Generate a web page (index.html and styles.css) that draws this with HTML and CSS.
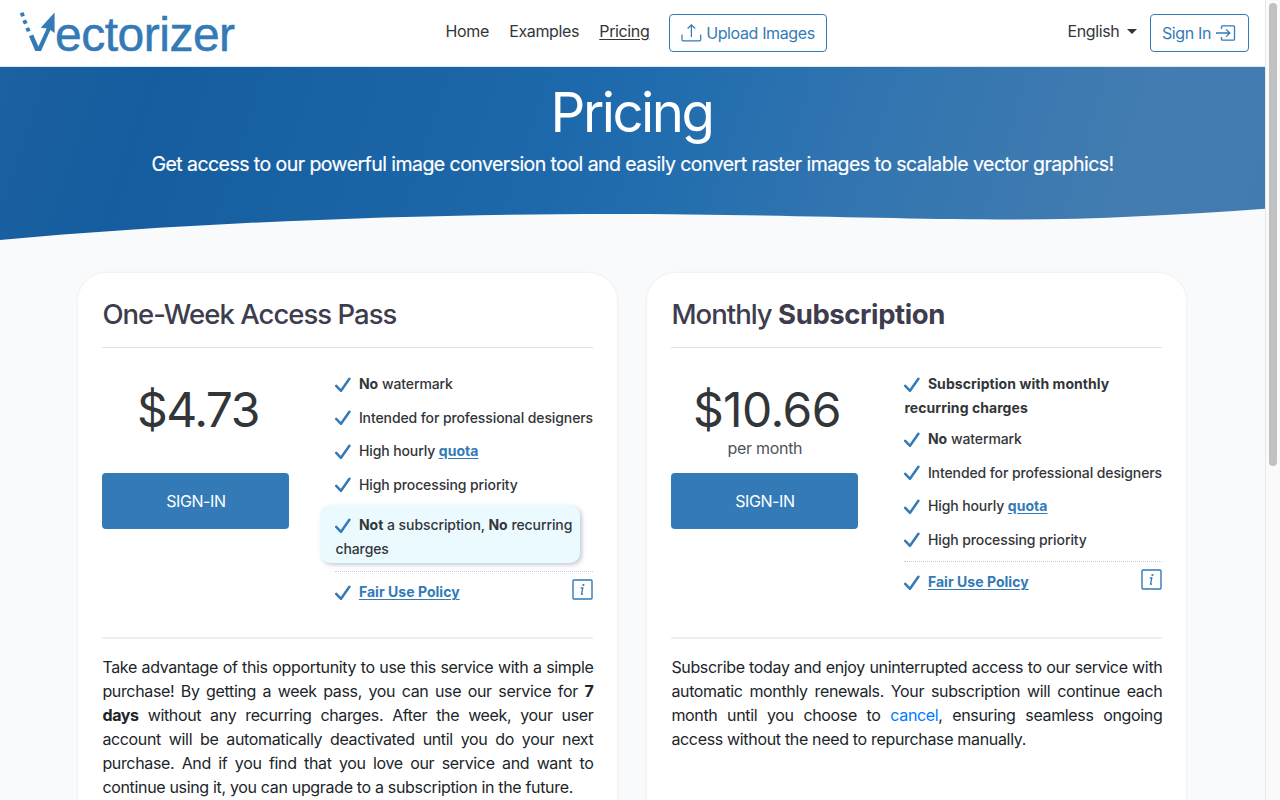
FILE: index.html
```html
<!DOCTYPE html>
<html lang="en">
<head>
<meta charset="utf-8">
<title>Pricing - Vectorizer</title>
<link rel="stylesheet" href="styles.css">
</head>
<body>
<svg class="defs" width="0" height="0" aria-hidden="true">
  <symbol id="check" viewBox="0 0 16 16"><path d="M1.2 8.8 L6 13.8 L14.4 1.8" fill="none" stroke="#337ab7" stroke-width="2.500" stroke-linecap="round" stroke-linejoin="round"/></symbol>
  <symbol id="info" viewBox="0 0 21 21"><rect x="1" y="1" width="19" height="19" rx="1" fill="none" stroke="#337ab7" stroke-width="1.4"/><circle cx="11.4" cy="6" r="1.1" fill="#337ab7"/><path d="M8.8 9h2l-1.3 6.2h1.6" fill="none" stroke="#337ab7" stroke-width="1.3"/></symbol>
</svg>
<div class="page">
  <header class="header">
    <a class="logo">
      <svg width="240" height="66" viewBox="0 0 240 66">
        <g fill="#337ab7">
          <path d="M19.800 13.500l3.600-1.400 1.500 3.300-3.600 1.500zM22.400 21l3.600-1.400 1.500 3.400-3.600 1.400zM25.400 28.600l3.700-1.400 1.500 3.500-3.700 1.400z"/>
          <path d="M29 36.200l4.200-1.600 5.200 11.800 8.300-18-6-.6L54.600 12.500V33l-4.200-3.100-9.300 21.200h-5.800z"/>
        </g>
        <text class="logo-text" x="55" y="51">ectorizer</text>
      </svg>
    </a>
    <nav class="nav">
      <a>Home</a><a>Examples</a><a class="current">Pricing</a>
    </nav>
    <a class="btn upload">
      <svg width="21" height="20" viewBox="0 0 21 20"><path d="M1 11.5v5.3q0 1 1 1h16.700q1 0 1-1v-5.300M10.400 14V2M6.600 5.500l3.800-3.700 3.800 3.700" fill="none" stroke="#337ab7" stroke-width="1.200"/></svg>
      <span>Upload Images</span>
    </a>
    <a class="lang">English<i class="caret"></i></a>
    <a class="btn signin">
      <span>Sign In</span>
      <svg width="20" height="18" viewBox="0 0 20 18"><path d="M5.500 5V2.800q0-1 1-1h11q1 0 1 1v12.400q0 1-1 1h-11q-1 0-1-1V13M0 9h13.500M10.200 5.400L13.800 9l-3.600 3.600" fill="none" stroke="#337ab7" stroke-width="1.300"/></svg>
    </a>
  </header>
  <section class="hero">
    <h1>Pricing</h1>
    <p>Get access to our powerful image conversion tool and easily convert raster images to scalable vector graphics!</p>
    <svg class="wave" width="1265" height="35" viewBox="0 206 1265 35"><path d="M0 240C200 222 420 214 610 214C760 214 900 219.500 1010 219.500C1090 219.500 1180 215 1265 208.700V241H0Z" fill="#f9fafc"/></svg>
  </section>
  <main class="cards">
    <article class="card">
      <h2>One-Week Access Pass</h2>
      <div class="body">
        <div class="buy">
          <div class="price tight">$4.73</div>
          <div class="period"></div>
          <a class="cta">SIGN-IN</a>
        </div>
        <div class="features">
          <ul>
            <li><svg class="check"><use href="#check"/></svg><b>No</b> watermark</li>
            <li><svg class="check"><use href="#check"/></svg>Intended for professional designers</li>
            <li><svg class="check"><use href="#check"/></svg>High hourly <a>quota</a></li>
            <li><svg class="check"><use href="#check"/></svg>High processing priority</li>
          </ul>
          <div class="highlight"><svg class="check"><use href="#check"/></svg><b>Not</b> a subscription, <b>No</b> recurring<br>charges</div>
          <div class="fair"><span><svg class="check"><use href="#check"/></svg><a>Fair Use Policy</a></span><svg class="info"><use href="#info"/></svg></div>
        </div>
      </div>
      <p class="desc">Take advantage of this opportunity to use this service with a simple<br>purchase! By getting a week pass, you can use our service for <b>7</b><br><b>days</b> without any recurring charges. After the week, your user<br>account will be automatically deactivated until you do your next<br>purchase. And if you find that you love our service and want to<br><span class="last">continue using it, you can upgrade to a subscription in the future.</span></p>
    </article>
    <article class="card">
      <h2>Monthly <b>Subscription</b></h2>
      <div class="body">
        <div class="buy">
          <div class="price">$10.66</div>
          <div class="period">per month</div>
          <a class="cta">SIGN-IN</a>
        </div>
        <div class="features">
          <ul>
            <li class="double"><svg class="check"><use href="#check"/></svg><b>Subscription with monthly<br>recurring charges</b></li>
            <li><svg class="check"><use href="#check"/></svg><b>No</b> watermark</li>
            <li><svg class="check"><use href="#check"/></svg>Intended for professional designers</li>
            <li><svg class="check"><use href="#check"/></svg>High hourly <a>quota</a></li>
            <li><svg class="check"><use href="#check"/></svg>High processing priority</li>
          </ul>
          <div class="fair"><span><svg class="check"><use href="#check"/></svg><a>Fair Use Policy</a></span><svg class="info"><use href="#info"/></svg></div>
        </div>
      </div>
      <p class="desc">Subscribe today and enjoy uninterrupted access to our service with<br>automatic monthly renewals. Your subscription will continue each<br>month until you choose to <a>cancel</a>, ensuring seamless ongoing<br><span class="last">access without the need to repurchase manually.</span></p>
    </article>
  </main>
</div>
<div class="scrollbar"><div class="thumb"></div></div>
</body>
</html>
```

FILE: styles.css
```css
* { box-sizing: border-box; }
body {
  margin: 0;
  display: flex;
  height: 800px;
  overflow: hidden;
  background: #f9fafc;
  color: #212529;
  font: 16px/24px Inter, "Liberation Sans", sans-serif;
}
.defs { position: absolute; }
.page { width: 1265px; height: 800px; overflow: hidden; flex: none; }
.scrollbar { width: 15px; background: #fafafa; border-left: 1px solid #e8e8e8; padding: 3px 3px 0; }
.thumb { width: 8px; height: 463px; border-radius: 4px; background: #c1c1c1; }

.header {
  height: 67px;
  background: #fff;
  border-bottom: 1px solid #d9eaf5;
  display: flex;
  align-items: flex-start;
  letter-spacing: -0.370px;
}
.logo { width: 445.500px; height: 66px; }
.logo svg { display: block; }
.logo-text { font: 48px "Liberation Sans", Arial, sans-serif; fill: #337ab7; letter-spacing: -0.500px; stroke: #337ab7; stroke-width: .5px; }
.nav { display: flex; gap: 20.300px; padding-top: 19px; color: #333639; width: 223.500px; white-space: nowrap; }
.current { text-decoration: underline; text-underline-offset: 2px; }
.btn {
  height: 38px;
  margin-top: 14px;
  border: 1px solid #337ab7;
  border-radius: 4px;
  color: #337ab7;
  display: flex;
  align-items: center;
  justify-content: center;
  gap: 4px;
  white-space: nowrap;
}
.upload { width: 158px; }
.signin { width: 99px; margin-left: 12.500px; }
.signin svg { margin-left: 1px; }
.lang { margin: 19px 0 0 240.500px; width: 69.500px; color: #333639; display: flex; align-items: center; gap: 8px; }
.caret { border: 5px solid transparent; border-top-color: #333639; border-bottom: 0; flex: none; }

.hero {
  height: 174px;
  display: flex;
  flex-direction: column;
  align-items: center;
  color: #fff;
  text-align: center;
  background: linear-gradient(108deg, #1c61a1 0%, #155d9f 12%, #1e69ab 45%, #206cae 50%, #3275b0 68%, #427cb0 88%, #427bb0 100%);
}
.hero h1 { margin: 12px 0 0; font-size: 54.500px; line-height: 67px; font-weight: 400; letter-spacing: -2.500px; text-indent: -2px; }
.hero p { margin: 6px 0 0; font-size: 19.500px; line-height: 24px; letter-spacing: -0.550px; white-space: nowrap; -webkit-text-stroke: .2px #fff; }
.wave { display: block; margin-top: auto; }

.cards { display: flex; gap: 30px; padding: 32px 0 0 78.400px; }
.card {
  width: 539px;
  height: 600px;
  padding: 24px 24px;
  background: #fff;
  border-radius: 28px;
  box-shadow: 0 0 3px rgba(40, 50, 60, .09);
}
.card h2 {
  margin: 0;
  height: 51px;
  border-bottom: 1px solid #dfe1e3;
  font-size: 27.500px;
  line-height: 34px;
  font-weight: 500;
  color: #3d3d4e;
  letter-spacing: -0.970px;
  white-space: nowrap;
}
.card h2 b { letter-spacing: -0.400px; }
.body { display: flex; justify-content: space-between; height: 291px; border-bottom: 2px solid #edeff0; padding-top: 24px; }
.buy { width: 187px; text-align: center; }
.price { height: 65px; padding: 8px 0 0 4px; font-size: 48px; line-height: 60px; color: #333639; letter-spacing: -0.600px; }
.tight { letter-spacing: -1.500px; }
.period { height: 36px; line-height: 22px; color: #50545a; letter-spacing: -0.300px; }
.cta { display: block; height: 56px; line-height: 56px; border-radius: 4px; background: #337ab7; color: #fff; letter-spacing: -0.400px; }
.features { width: 258px; font-size: 14px; font-weight: 500; line-height: 24px; color: #333639; white-space: nowrap; letter-spacing: -0.100px; }
.features ul { list-style: none; margin: 0; padding: 0; }
.features li { height: 33.500px; }
.features .double { height: 55px; }
.features b { letter-spacing: .060px; }
.features a { color: #337ab7; font-weight: 700; letter-spacing: .040px; text-decoration: underline; text-underline-offset: 2px; }
.check { width: 16px; height: 16px; margin-right: 7.500px; vertical-align: -3.500px; }
.highlight {
  width: 260px;
  height: 58px;
  margin: -1px 0 8px -15.500px;
  padding: 8px 0 0 15.500px;
  border-radius: 10px;
  background: #ebfaff;
  box-shadow: 2px 2px 4px rgba(60, 80, 130, .3);
  letter-spacing: -0.090px;
}
.fair { display: flex; justify-content: space-between; border-top: 1px dotted #c6cacd; padding-top: 8px; }
.info { width: 21px; height: 21px; margin-top: -1px; }
.desc { margin: 16px 0 0; text-align: justify; text-align-last: justify; letter-spacing: -0.350px; white-space: nowrap; }
.desc .last { display: block; text-align-last: left; letter-spacing: -0.330px; }
.desc a { color: #007bff; }
b { font-weight: 700; }
```
